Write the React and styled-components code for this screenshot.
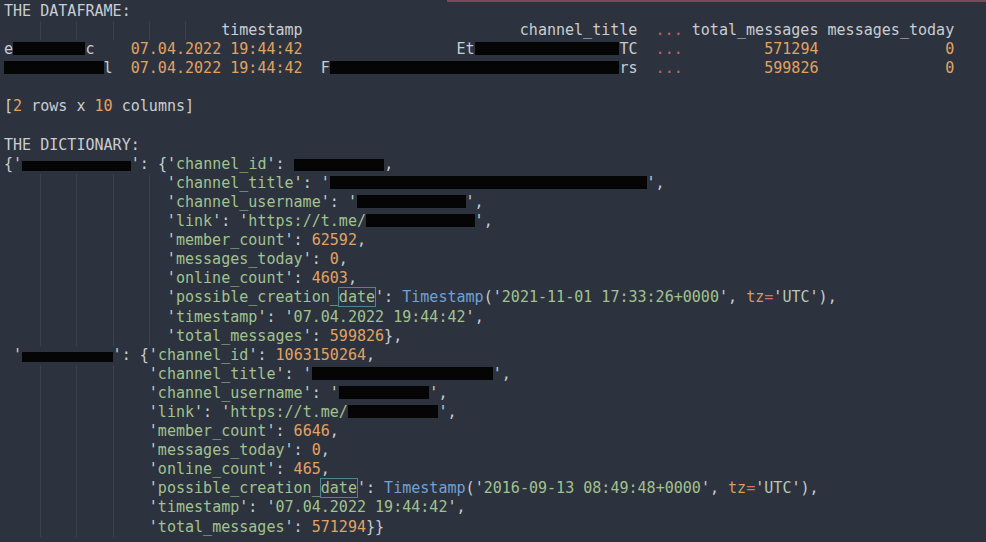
import React from "react";
import styled, { createGlobalStyle } from "styled-components";

const LINE = "19.1px";

const GlobalStyle = createGlobalStyle`
  html, body {
    margin: 0;
    padding: 0;
    background: #2c333e;
  }
`;

const Screen = styled.div`
  position: relative;
  min-height: 542px;
  box-sizing: border-box;
  padding: 2px 0 0 4px;
  background: #2c333e;
  color: #c9cdd2;
  font-family: "DejaVu Sans Mono", "Liberation Mono", monospace;
  font-size: 15.04px;
  overflow: hidden;

  &::before {
    content: "";
    position: absolute;
    top: 0;
    left: 447px;
    right: 0;
    height: 2px;
    background: #7a4a5c;
  }
`;

const Line = styled.div`
  white-space: pre;
  height: ${LINE};
  line-height: ${LINE};
`;

const Str = styled.span`
  color: ${(p) => (p.$soft ? "#b9c7b4" : "#a2c28f")};
`;

const Quote = styled.span`
  color: #c9cfcf;
`;

const Num = styled.span`
  color: #e2a262;
`;

const Dots = styled.span`
  color: #c2656f;
`;

const Cls = styled.span`
  color: #72a0d2;
`;

const Kw = styled.span`
  color: #d89c5c;
`;

const Op = styled.span`
  color: #d9735c;
`;

const Highlight = styled.span`
  outline: 1px solid #4d8593;
  outline-offset: 0;
`;

const Redact = styled.span`
  display: inline-block;
  width: ${(p) => p.$w}ch;
  height: ${(p) => p.$h || 13}px;
  background: #050505;
  vertical-align: ${(p) => (p.$drop != null ? p.$drop : -1)}px;
`;

const Guide = styled.span`
  display: inline-block;
  width: ${(p) => p.$w}ch;
  height: ${LINE};
  vertical-align: top;
  box-shadow: inset 1px 0 0 #39414c;
`;

function Indent({ n }) {
  const parts = [<span key="s">{"    "}</span>];
  let pos = 4;
  while (pos < n) {
    const w = Math.min(4, n - pos);
    parts.push(<Guide key={pos} $w={w} />);
    pos += w;
  }
  return <>{parts}</>;
}

const Q = () => <Quote>'</Quote>;

function Key({ name }) {
  return (
    <>
      <Q />
      <Str>{name}</Str>
      <Q />
      {": "}
    </>
  );
}

function Created({ stamp }) {
  return (
    <>
      <Q />
      <Str>possible_creation_</Str>
      <Highlight>
        <Str>date</Str>
      </Highlight>
      <Q />
      {": "}
      <Cls>Timestamp</Cls>
      {"("}
      <Q />
      <Str>{stamp}</Str>
      <Q />
      {", "}
      <Kw>tz</Kw>
      <Op>=</Op>
      <Q />
      <Str $soft>UTC</Str>
      <Q />
      {"),"}
    </>
  );
}

function Channel({ indent, title, user, members, online, stamp, total, close }) {
  return (
    <>
      <Line>
        <Indent n={indent} />
        <Key name="channel_title" />
        <Q />
        <Redact $w={title} />
        <Q />,
      </Line>
      <Line>
        <Indent n={indent} />
        <Key name="channel_username" />
        <Q />
        <Redact $w={user} />
        <Q />,
      </Line>
      <Line>
        <Indent n={indent} />
        <Key name="link" />
        <Q />
        <Str>https://t.me/</Str>
        <Redact $w={user} />
        <Q />,
      </Line>
      <Line>
        <Indent n={indent} />
        <Key name="member_count" />
        <Num>{members}</Num>,
      </Line>
      <Line>
        <Indent n={indent} />
        <Key name="messages_today" />
        <Num>0</Num>,
      </Line>
      <Line>
        <Indent n={indent} />
        <Key name="online_count" />
        <Num>{online}</Num>,
      </Line>
      <Line>
        <Indent n={indent} />
        <Created stamp={stamp} />
      </Line>
      <Line>
        <Indent n={indent} />
        <Key name="timestamp" />
        <Q />
        <Str>07.04.2022 19:44:42</Str>
        <Q />,
      </Line>
      <Line>
        <Indent n={indent} />
        <Key name="total_messages" />
        <Num>{total}</Num>
        {close}
      </Line>
    </>
  );
}

export default function App() {
  return (
    <>
      <GlobalStyle />
      <Screen>
        <Line>THE DATAFRAME:</Line>
        <Line>
          <Indent n={24} />
          {"timestamp" + " ".repeat(24) + "channel_title  "}
          <Dots>...</Dots>
          {" total_messages messages_today"}
        </Line>
        <Line>
          {"e"}
          <Redact $w={8} />
          {"c    "}
          <Num>07.04.2022 19:44:42</Num>
          {" ".repeat(17) + "Et"}
          <Redact $w={16} />
          {"TC  "}
          <Dots>...</Dots>
          {" ".repeat(9)}
          <Num>571294</Num>
          {" ".repeat(14)}
          <Num>0</Num>
        </Line>
        <Line>
          <Redact $w={11} />
          {"l  "}
          <Num>07.04.2022 19:44:42</Num>
          {"  F"}
          <Redact $w={32} />
          {"rs  "}
          <Dots>...</Dots>
          {" ".repeat(9)}
          <Num>599826</Num>
          {" ".repeat(14)}
          <Num>0</Num>
        </Line>
        <Line />
        <Line>
          {"["}
          <Num>2</Num>
          {" rows x "}
          <Num>10</Num>
          {" columns]"}
        </Line>
        <Line />
        <Line>THE DICTIONARY:</Line>
        <Line>
          {"{"}
          <Q />
          <Redact $w={12} $h={10} $drop={-2} />
          <Q />
          {": {"}
          <Key name="channel_id" />
          <Redact $w={10} $h={12} $drop={-2} />,
        </Line>
        <Channel
          indent={18}
          title={35}
          user={12}
          members="62592"
          online="4603"
          stamp="2021-11-01 17:33:26+0000"
          total="599826"
          close="},"
        />
        <Line>
          {" "}
          <Q />
          <Redact $w={10} $h={10} $drop={-2} />
          <Q />
          {": {"}
          <Key name="channel_id" />
          <Num>1063150264</Num>,
        </Line>
        <Channel
          indent={16}
          title={20}
          user={10}
          members="6646"
          online="465"
          stamp="2016-09-13 08:49:48+0000"
          total="571294"
          close="}}"
        />
      </Screen>
    </>
  );
}
